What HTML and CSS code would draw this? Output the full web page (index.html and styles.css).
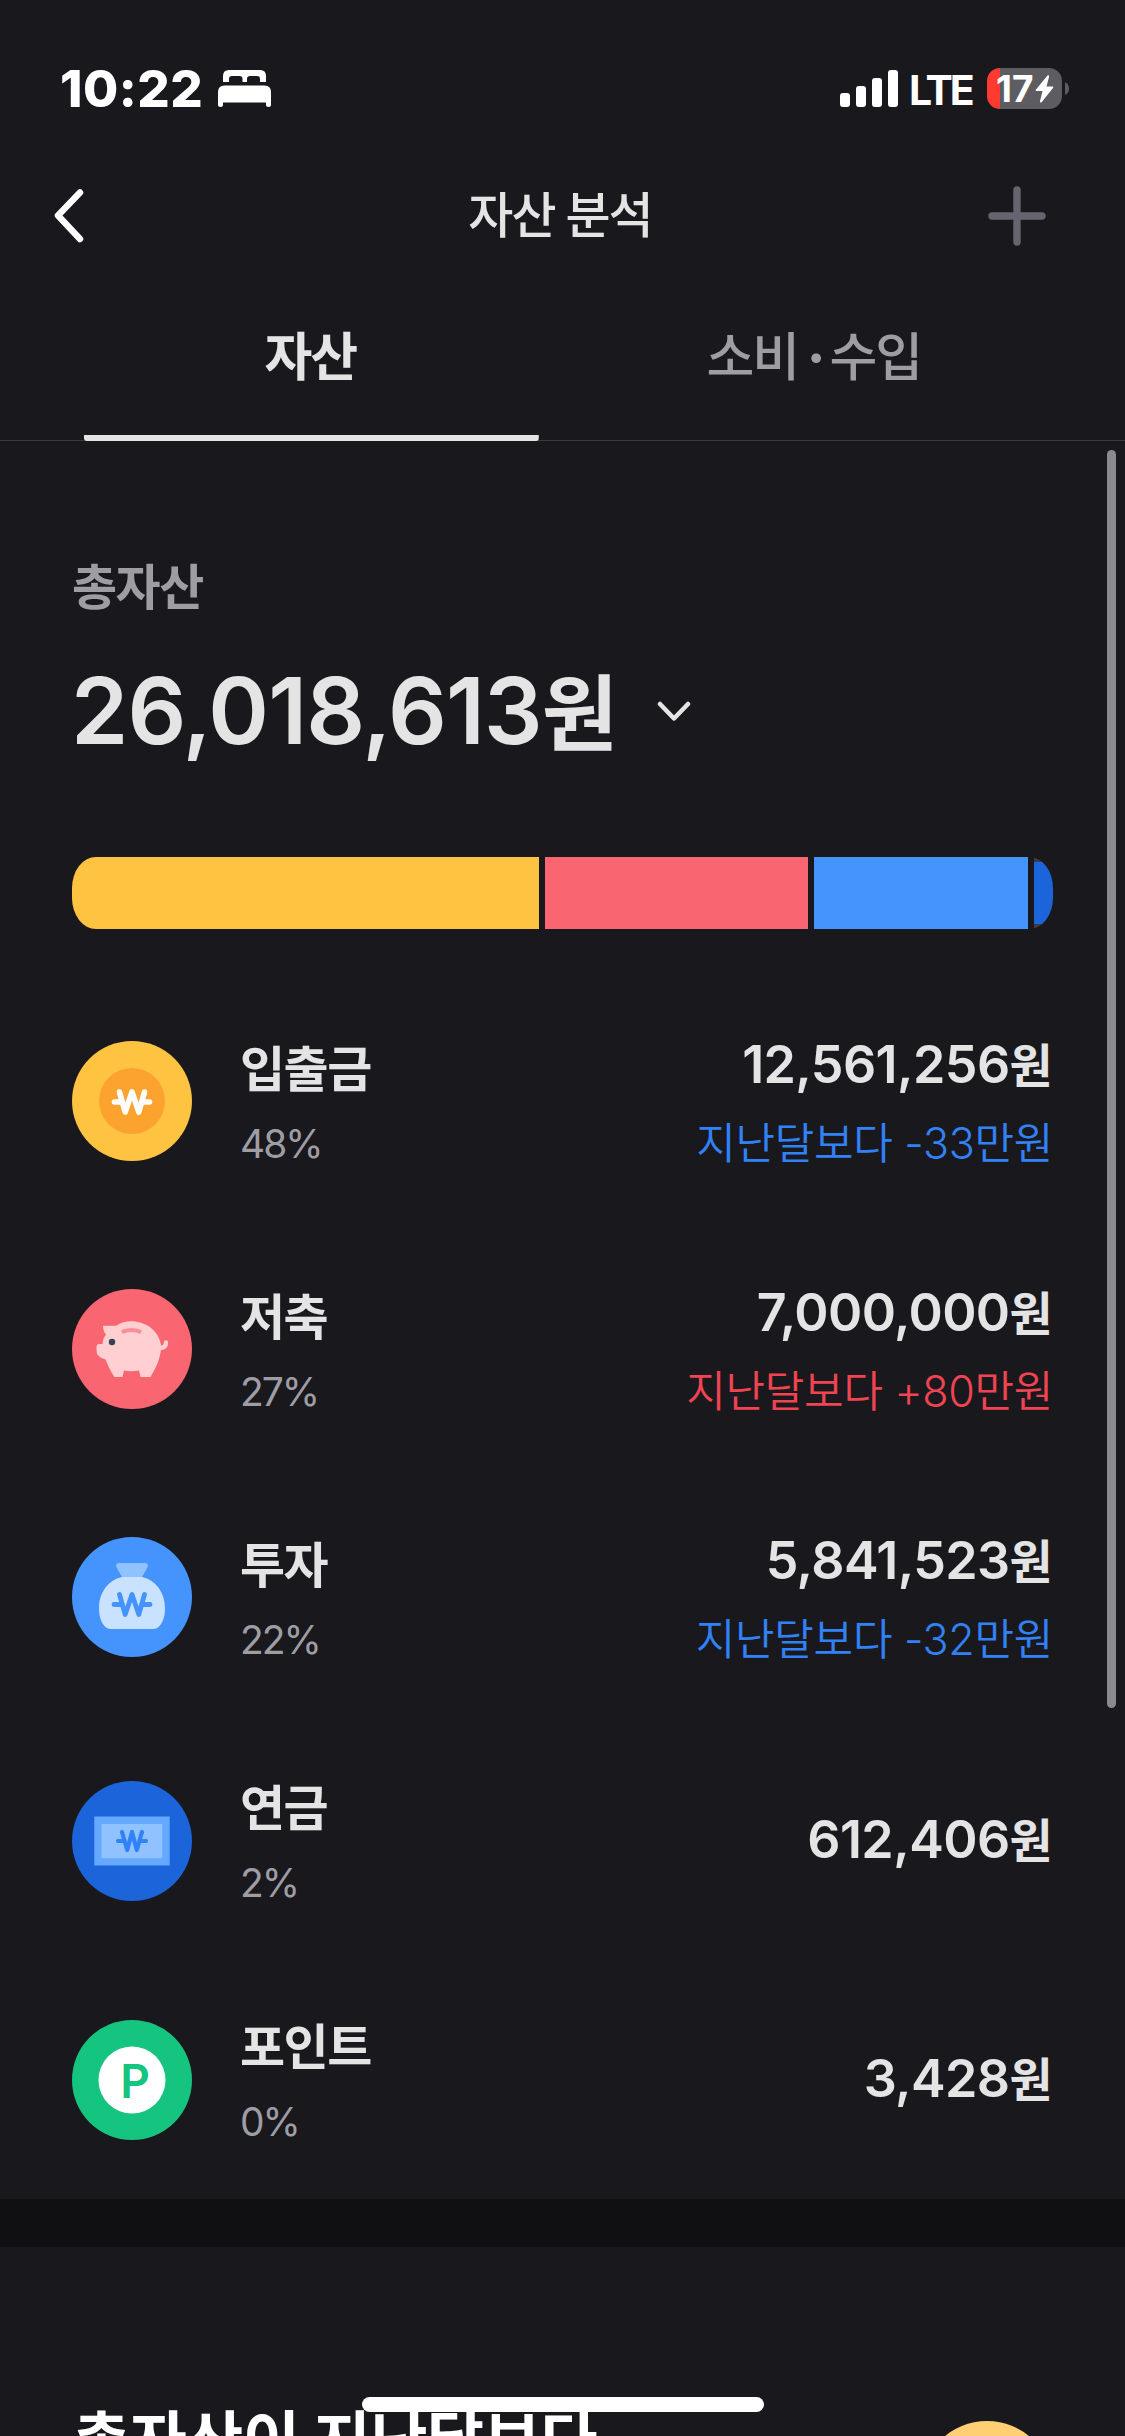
FILE: index.html
```html
<!DOCTYPE html>
<html lang="ko">
<head>
<meta charset="utf-8">
<title>자산 분석</title>
<link rel="stylesheet" href="styles.css">
</head>
<body>
<div class="screen">
  <div class="status">
    <div class="status-left">
      <span class="time">10:22</span>
      <svg class="bed" width="53" height="37" viewBox="0 0 53 37" fill="#fff">
        <path d="M5 12V6Q5 0 11 0H42Q48 0 48 6V12H42V9Q42 6 39 6H32Q29 6 29 9V12H24.500V9Q24.500 6 21.500 6H14Q11 6 11 9V12Z"/>
        <path d="M0 22Q0 15.500 6.500 15.500H46.500Q53 15.500 53 22V34.500Q53 37 50.500 37T48 34.500V32.500H5V34.500Q5 37 2.500 37T0 34.500Z"/>
      </svg>
    </div>
    <div class="status-right">
      <svg width="58" height="37" viewBox="0 0 58 37" fill="#fff">
        <rect x="0" y="23" width="10" height="14" rx="3"/><rect x="16" y="16" width="10" height="21" rx="3"/>
        <rect x="32" y="8" width="10" height="29" rx="3"/><rect x="48" y="0" width="10" height="37" rx="3"/>
      </svg>
      <span class="lte">LTE</span>
      <div class="battery">
        <span class="level">17</span>
        <svg width="19" height="28" viewBox="0 0 19 28"><path d="M12.500 .5 1 14.500Q0 16 1.800 16H7.500L5 26Q5 28.500 6.800 27L18 13Q19 11.500 17.200 11.500H11.500L14 2Q14 -.8 12.500 .5Z" fill="#fff"/></svg>
      </div>
      <svg class="nub" width="4" height="13" viewBox="0 0 4 13"><path d="M0 0Q4 2 4 6.500T0 13Z" fill="#5d5c61"/></svg>
    </div>
  </div>

  <header class="nav">
    <svg width="30" height="54" viewBox="0 0 30 54" fill="none" stroke="#fff" stroke-width="6.500" stroke-linecap="round" stroke-linejoin="round"><path d="M26 3.500 4 26.500 26 50"/></svg>
    <h1 class="title">자산 분석</h1>
    <svg width="58" height="60" viewBox="0 0 58 60" fill="none" stroke="#65646f" stroke-width="7.400" stroke-linecap="round"><path d="M29 4V56M4 30H54"/></svg>
  </header>

  <nav class="tabs">
    <a class="tab active"><span class="tab-text">자산</span></a>
    <a class="tab"><span class="tab-text">소비<span class="dot">·</span>수입</span></a>
  </nav>

  <section class="summary">
    <h2 class="label">총자산</h2>
    <div class="total">
      <span class="total-text">26,018,613<span class="won">원</span></span>
      <svg width="34" height="22" viewBox="0 0 34 22" fill="none" stroke="#e4e4e5" stroke-width="4.500" stroke-linecap="round" stroke-linejoin="round"><path d="M3 4 17 18.500 31 4"/></svg>
    </div>
    <div class="bar">
      <i class="seg yellow"></i><i class="seg pink"></i><i class="seg blue"></i><i class="seg navy"></i>
    </div>
  </section>

  <ul class="list">
    <li class="row tall">
      <svg class="icon" viewBox="0 0 120 120"><circle cx="60" cy="60" r="60" fill="#ffc342"/><circle cx="60" cy="60" r="33" fill="#fca22f"/>
        <path d="M47.500 51 53.200 71 60 51 66.800 71 72.500 51M42.500 61H49M71 61H77.500" fill="none" stroke="#fff" stroke-width="5.600" stroke-linecap="round" stroke-linejoin="round"/></svg>
      <div class="info"><span class="name">입출금</span><span class="pct">48%</span></div>
      <div class="values"><span class="amount">12,561,256<span class="won">원</span></span><span class="delta down">지난달보다 -33만원</span></div>
    </li>
    <li class="row tall">
      <svg class="icon" viewBox="0 0 120 120"><circle cx="60" cy="60" r="60" fill="#f96570"/>
        <path d="M88 59Q94 59 94 53.500" fill="none" stroke="#ffcfd1" stroke-width="4.400" stroke-linecap="round"/>
        <path d="M31 36.700H44Q51 32.300 59 32.300C74 32.300 87 42 89 56V60C88.500 69 83.500 80 78.500 88H68.500L67 81.500Q59.500 83 52 81.500L50.500 88H42.500C38 82 36 76 33.500 70.500Q28 69 25 65 24.300 60 24.500 57 25 55 27 55H30.500Q31 49 34 45.500 31 42 31 36.700Z" fill="#ffcfd1"/>
        <path d="M51.500 42.500Q59.500 39.500 67.500 42.500" fill="none" stroke="#fa8f97" stroke-width="4.200" stroke-linecap="round"/><circle cx="40" cy="53" r="3.200" fill="#364153"/></svg>
      <div class="info"><span class="name">저축</span><span class="pct">27%</span></div>
      <div class="values"><span class="amount">7,000,000<span class="won">원</span></span><span class="delta up">지난달보다 +80만원</span></div>
    </li>
    <li class="row tall">
      <svg class="icon" viewBox="0 0 120 120"><circle cx="60" cy="60" r="60" fill="#4593fc"/>
        <path d="M50 40 44.500 30.500Q43 26 47 26H73Q77 26 75.500 30.500L70 40Z" fill="#90c2ff"/>
        <path d="M50 40H70C84 43 93 56 93 71 93 79 91 85 87.500 89Q85 92 81 92H39Q35 92 32.500 89C29 85 27 79 27 71 27 56 36 43 50 40Z" fill="#c9e2ff"/>
        <path d="M47.500 57.500 53.200 77.500 60 57.500 66.800 77.500 72.500 57.500M42 67.500H49M71 67.500H78" fill="none" stroke="#4593fc" stroke-width="4.800" stroke-linecap="round" stroke-linejoin="round"/></svg>
      <div class="info"><span class="name">투자</span><span class="pct">22%</span></div>
      <div class="values"><span class="amount">5,841,523<span class="won">원</span></span><span class="delta down">지난달보다 -32만원</span></div>
    </li>
    <li class="row">
      <svg class="icon" viewBox="0 0 120 120"><circle cx="60" cy="60" r="60" fill="#1b64da"/>
        <path d="M22.300 35.500H97.700V84.500H22.300Z" fill="#64a8ff"/><path d="M29.500 43H90.300V77.300H29.500Z" fill="#90c2ff"/>
        <path d="M50 51 55.200 69 60 51 64.800 69 70 51M46 60H51.500M68.500 60H74" fill="none" stroke="#3182f6" stroke-width="4.200" stroke-linecap="round" stroke-linejoin="round"/></svg>
      <div class="info"><span class="name">연금</span><span class="pct">2%</span></div>
      <div class="values"><span class="amount">612,406<span class="won">원</span></span></div>
    </li>
    <li class="row">
      <svg class="icon" viewBox="0 0 120 120"><circle cx="60" cy="60" r="60" fill="#15c47e"/><circle cx="60" cy="60" r="33.500" fill="#fff"/><text class="point" x="63" y="77.500" text-anchor="middle">P</text></svg>
      <div class="info"><span class="name">포인트</span><span class="pct">0%</span></div>
      <div class="values"><span class="amount">3,428<span class="won">원</span></span></div>
    </li>
  </ul>

  <section class="next">
    <h2 class="next-title">총자산이 지난달보다</h2>
    <i class="coin"></i>
  </section>
  <i class="scrollbar"></i>
  <i class="home"></i>
</div>
</body>
</html>
```
FILE: styles.css
```css
* { box-sizing: border-box; margin: 0; padding: 0; }
body { background: #19181d; }
.screen {
  position: relative; width: 1125px; height: 2436px; overflow: hidden;
  display: flex; flex-direction: column;
  background: #19181d; color: #e4e4e5;
  font-family: Inter, "Noto Sans CJK KR", sans-serif;
  white-space: nowrap;
}
svg, i { display: block; flex: none; }
h1, h2 { font-weight: 500; }

.status { height: 177px; flex: none; display: flex; justify-content: space-between; padding: 68px 56px 0 60px; color: #fff; }
.status-left, .status-right { display: flex; height: 41px; align-items: center; }
.time { width: 142px; font-size: 51px; font-weight: 800; line-height: 43px; letter-spacing: 0.5px; }
.bed { margin-left: 16px; }
.lte { font-size: 41px; font-weight: 700; margin: 4px 0 0 11px; width: 66px; line-height: 41px; letter-spacing: -3px; }
.battery { width: 75px; height: 41px; margin-left: 12px; border-radius: 13px; padding-left: 9px; display: flex; align-items: center; background: linear-gradient(90deg, #ff3b30 13px, #5d5c61 13px); }
.level { width: 39px; font-size: 37px; line-height: 41px; font-weight: 700; }
.nub { margin-left: 3px; }

.nav { height: 77px; flex: none; display: grid; grid-template-columns: 60px 1fr 60px; align-items: center; justify-items: center; padding: 0 79px 0 54px; }
.nav svg:first-child { justify-self: start; }
.nav svg:last-child { justify-self: end; }
.title { font-size: 49px; line-height: 60px; letter-spacing: -2px; margin-left: 20px; }

.tabs { height: 187px; flex: none; display: grid; grid-template-columns: 1fr 1fr; gap: 48px; padding: 0 84px; border-bottom: 1px solid #3a3941; }
.tab { display: flex; justify-content: center; padding-top: 74px; font-size: 52px; line-height: 60px; font-weight: 500; color: #9e9da4; letter-spacing: -2px; }
.dot { margin: 0 6px 0 9px; font-weight: 800; }
.active { font-weight: 700; color: #e4e4e5; margin-bottom: -1px; padding-right: 2px; background: linear-gradient(#e4e4e5, #e4e4e5) bottom / 100% 6px no-repeat; border-radius: 3px; }

.summary { height: 536px; flex: none; padding: 117px 72px 0; }
.label { font-size: 49px; line-height: 60px; font-weight: 700; color: #9e9da4; letter-spacing: -1.500px; }
.total { display: flex; align-items: center; gap: 40px; margin: 37px 0 0 -1px; }
.total-text { font-size: 92px; line-height: 112px; font-weight: 600; letter-spacing: -0.900px; }
.won { font-size: 0.9em; line-height: 1; }
.bar { display: flex; gap: 6px; height: 72px; margin-top: 90px; border-radius: 24px / 31px; overflow: hidden; }
.seg { height: 72px; }
.yellow { width: 467px; background: #ffc342; }
.pink { width: 263px; background: #f96570; }
.blue { width: 214px; background: #4593fc; }
.navy { flex: 1; background: linear-gradient(#3c3c47 5px, #1b64da 5px 67px, #3c3c47 67px); }

.list { list-style: none; }
.row { display: flex; align-items: center; height: 239px; padding: 0 72px; }
.tall { height: 248px; }
.icon { width: 120px; height: 120px; }
.point { font: 600 46px Inter, sans-serif; fill: #15c47e; }
.info { display: flex; flex-direction: column; margin-left: 48px; padding-top: 10px; gap: 14px; }
.tall .info { padding-top: 12px; }
.name { font-size: 49px; line-height: 60px; font-weight: 600; letter-spacing: -1.500px; }
.pct { font-size: 39px; line-height: 60px; color: #9e9da4; letter-spacing: -2px; }
.values { flex: 1; display: flex; flex-direction: column; align-items: flex-end; gap: 18px; padding-bottom: 2px; }
.tall .values { padding: 6px 0 0; }
.amount { font-size: 52px; line-height: 60px; font-weight: 600; letter-spacing: -0.600px; margin-right: 1px; }
.delta { font-size: 43px; line-height: 60px; font-weight: 350; letter-spacing: -0.300px; }
.down { color: #3182f6; }
.up { color: #f04452; }

.next { flex: 1; border-top: 48px solid #101012; padding: 149px 72px 0 73px; display: flex; justify-content: space-between; color: #fff; }
.next-title { font-size: 62px; line-height: 90px; font-weight: 700; letter-spacing: -0.400px; }
.coin { width: 132px; height: 132px; border-radius: 50%; background: #ffd073; margin-top: 25px; }
.scrollbar { position: absolute; left: 1107px; top: 450px; width: 9px; height: 1258px; border-radius: 5px; background: #8b8b8d; }
.home { position: absolute; left: 362px; top: 2397px; width: 402px; height: 15px; border-radius: 8px; background: #fff; }
```
